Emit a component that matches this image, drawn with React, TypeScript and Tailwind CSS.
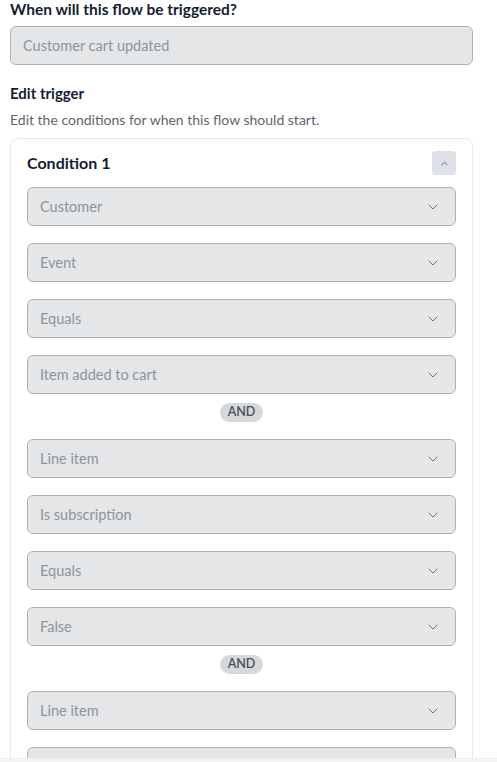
import { ChevronDown, ChevronUp } from 'lucide-react';

const group1 = ['Customer', 'Event', 'Equals', 'Item added to cart'];
const group2 = ['Line item', 'Is subscription', 'Equals', 'False'];
const group3 = ['Line item', ''];

function SelectBox({ label }: { label: string }) {
  return (
    <div className="flex items-center justify-between h-[39px] pl-3 pr-[14px] bg-[#e4e6e8] border border-[#a9b3b9] rounded-md">
      <span className="text-[14.5px] text-[#8c959c]">{label}</span>
      <ChevronDown size={16} strokeWidth={1.5} className="text-[#6d757c]" />
    </div>
  );
}

function AndPill() {
  return (
    <div className="flex justify-center -mt-[8px]">
      <span className="px-2 h-[19px] flex items-center rounded-full bg-[#d5d8dc] text-[12.5px] font-semibold text-[#4a5058]">
        AND
      </span>
    </div>
  );
}

export default function App() {
  return (
    <div className="h-[762px] overflow-hidden flex flex-col bg-white" style={{ fontFamily: 'Lato, "Noto Sans", sans-serif' }}>
      <div className="flex-1 overflow-hidden pl-[10px] pr-[24px]">
        <h2 className="text-[15.5px] font-bold text-[#141c33] leading-[18px]">When will this flow be triggered?</h2>
        <div className="mt-[8px] h-[39px] flex items-center px-3 bg-[#e4e6e8] border border-[#a9b3b9] rounded-md">
          <span className="text-[14.5px] text-[#8c959c]">Customer cart updated</span>
        </div>

        <h3 className="mt-[19px] text-[15px] font-bold text-[#141c33] leading-[18px]">Edit trigger</h3>
        <p className="mt-[8px] text-[14px] text-[#5f656b] leading-[20px]">Edit the conditions for when this flow should start.</p>

        <div className="mt-[8px] border border-[#e6e8eb] rounded-lg px-[16px] pt-[12px] pb-4">
          <div className="flex items-center justify-between mb-[12px]">
            <span className="text-[16px] font-bold text-[#141c33]">Condition 1</span>
            <button className="w-[24px] h-[24px] rounded bg-[#dfe1e9] flex items-center justify-center">
              <ChevronUp size={11} strokeWidth={2} className="text-[#5a6270]" />
            </button>
          </div>
          <div className="flex flex-col gap-[17px]">
            {group1.map((l, i) => (
              <SelectBox key={'a' + i} label={l} />
            ))}
            <AndPill />
            {group2.map((l, i) => (
              <SelectBox key={'b' + i} label={l} />
            ))}
            <AndPill />
            {group3.map((l, i) => (
              <SelectBox key={'c' + i} label={l} />
            ))}
          </div>
        </div>
      </div>
      <div className="h-[4px] bg-[#f4f5f6] border-t border-[#eceef0]" />
    </div>
  );
}
